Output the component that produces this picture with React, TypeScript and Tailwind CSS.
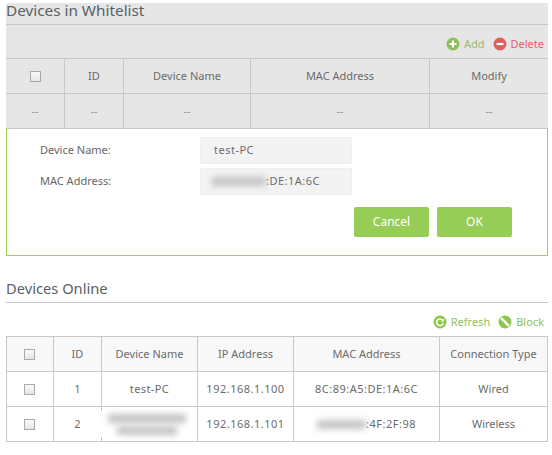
const font = { fontFamily: '"Noto Sans", sans-serif' };

const whitelistCols = 'grid-cols-[59px_59px_127px_179px_118px]';
const onlineCols = 'grid-cols-[47px_48px_96px_96px_146px_107px]';

const Box = ({ className = '' }: { className?: string }) => (
  <span className={`block w-[11px] h-[11px] border border-[#aaa] bg-gradient-to-b from-[#fafafa] to-[#e6e6e6] ${className}`} />
);

const Blur = ({ w }: { w: string }) => <span className={`inline-block h-[9px] bg-[#c4c4c4] blur-[3px] ${w}`} />;

const AddIcon = () => (
  <svg width="14" height="14" viewBox="0 0 14 14">
    <circle cx="7" cy="7" r="6.5" fill="#8fbf5f" />
    <path d="M7 3.5v7M3.5 7h7" stroke="#fff" strokeWidth="2" />
  </svg>
);

const DeleteIcon = () => (
  <svg width="14" height="14" viewBox="0 0 14 14">
    <circle cx="7" cy="7" r="6.5" fill="#d9625f" />
    <path d="M3.5 7h7" stroke="#fff" strokeWidth="2.2" />
  </svg>
);

const RefreshIcon = () => (
  <svg width="14" height="14" viewBox="0 0 14 14">
    <circle cx="7" cy="7" r="6.5" fill="#8cc84b" />
    <path d="M9.6 5.2A3.3 3.3 0 1 0 10.2 8" fill="none" stroke="#fff" strokeWidth="1.5" />
    <path d="M10.8 3.2v3.2H7.8z" fill="#fff" />
  </svg>
);

const BlockIcon = () => (
  <svg width="14" height="14" viewBox="0 0 14 14">
    <circle cx="7" cy="7" r="6.5" fill="#8cc84b" />
    <path d="M3.2 3.2l7.6 7.6" stroke="#fff" strokeWidth="2.4" />
  </svg>
);

const Cell = ({ children, last, bottom, className = '' }: any) => (
  <div className={`flex items-center justify-center border-[#c8c8c8] ${last ? '' : 'border-r'} ${bottom ? 'border-b' : ''} ${className}`}>
    {children}
  </div>
);

export default function App() {
  const whitelistHead = ['ID', 'Device Name', 'MAC Address', 'Modify'];
  return (
    <div className="w-[552px] h-[455px] bg-white pt-[3px] pl-[6px] pr-[4px] text-[11px] text-[#6b6b6b] overflow-hidden" style={font}>
      <div className="bg-[#e6e6e6]">
        <div className="h-[22px] border-b border-[#c8c8c8] text-[15.3px] leading-[15px] text-[#5a5f66]">Devices in Whitelist</div>
        <div className="h-[33px] flex items-center justify-end gap-[8px] pr-[4px] pt-[5px]">
          <span className="flex items-center gap-[4px] text-[#9bb86e]"><AddIcon />Add</span>
          <span className="flex items-center gap-[4px] text-[#e8606a]"><DeleteIcon />Delete</span>
        </div>
        <div className={`grid ${whitelistCols} h-[36px] border-t border-b border-[#c8c8c8]`}>
          <Cell><Box /></Cell>
          {whitelistHead.map((h, i) => <Cell key={h} last={i === 3}>{h}</Cell>)}
        </div>
        <div className={`grid ${whitelistCols} h-[34px] text-[#999]`}>
          {[0, 1, 2, 3, 4].map((i) => <Cell key={i} last={i === 4}>--</Cell>)}
        </div>
      </div>

      <div className="h-[128px] bg-white border border-[#9bd25a] border-t-[#c8c8c8] pt-[8px]">
        <div className="flex items-center h-[27px] mb-[4px]">
          <span className="w-[193px] pl-[33px] text-[#666]">Device Name:</span>
          <span className="w-[152px] h-[27px] flex items-center pl-[13px] tracking-[0.5px] bg-[#f3f3f3] border border-[#eee]">test-PC</span>
        </div>
        <div className="flex items-center h-[27px]">
          <span className="w-[193px] pl-[33px] text-[#666]">MAC Address:</span>
          <span className="w-[152px] h-[27px] flex items-center pl-[11px] tracking-[0.5px] bg-[#f3f3f3] border border-[#eee]">
            <Blur w="w-[54px]" />:DE:1A:6C
          </span>
        </div>
        <div className="flex justify-end gap-[8px] pr-[35px] mt-[12px]">
          <button className="w-[75px] h-[30px] rounded-[2px] bg-[#96cd57] text-white text-[12px]">Cancel</button>
          <button className="w-[75px] h-[30px] rounded-[2px] bg-[#96cd57] text-white text-[12px]">OK</button>
        </div>
      </div>

      <div className="mt-[24px] h-[23px] border-b border-[#c8c8c8] text-[14.7px] leading-[16px] text-[#5a5f66]">Devices Online</div>
      <div className="h-[33px] flex items-center justify-end gap-[8px] pr-[4px] pt-[5px] text-[#8fbf5f]">
        <span className="flex items-center gap-[4px]"><RefreshIcon />Refresh</span>
        <span className="flex items-center gap-[4px]"><BlockIcon />Block</span>
      </div>
      <div className="border-t border-b border-x border-[#c8c8c8]">
        <div className={`grid ${onlineCols} h-[35px] bg-[#f8f8f8]`}>
          <Cell bottom><Box className="mr-[2px]" /></Cell>
          <Cell bottom>ID</Cell>
          <Cell bottom>Device Name</Cell>
          <Cell bottom>IP Address</Cell>
          <Cell bottom>MAC Address</Cell>
          <Cell bottom last>Connection Type</Cell>
        </div>
        <div className={`grid ${onlineCols} h-[35px]`}>
          <Cell bottom><Box className="mr-[2px]" /></Cell>
          <Cell bottom>1</Cell>
          <Cell bottom className="tracking-[0.4px]">test-PC</Cell>
          <Cell bottom className="tracking-[0.5px]">192.168.1.100</Cell>
          <Cell bottom className="tracking-[0.5px]">8C:89:A5:DE:1A:6C</Cell>
          <Cell bottom last>Wired</Cell>
        </div>
        <div className={`grid ${onlineCols} h-[34px]`}>
          <Cell><Box className="mr-[2px]" /></Cell>
          <Cell>2</Cell>
          <Cell>
            <div className="w-[93px] h-[26px] mr-[6px] shrink-0 bg-white flex flex-col items-center justify-center gap-[3px]">
              <Blur w="w-[78px]" />
              <Blur w="w-[60px]" />
            </div>
          </Cell>
          <Cell className="tracking-[0.5px]">192.168.1.101</Cell>
          <Cell className="tracking-[0.5px]"><Blur w="w-[49px]" />:4F:2F:98</Cell>
          <Cell last>Wireless</Cell>
        </div>
      </div>
    </div>
  );
}
